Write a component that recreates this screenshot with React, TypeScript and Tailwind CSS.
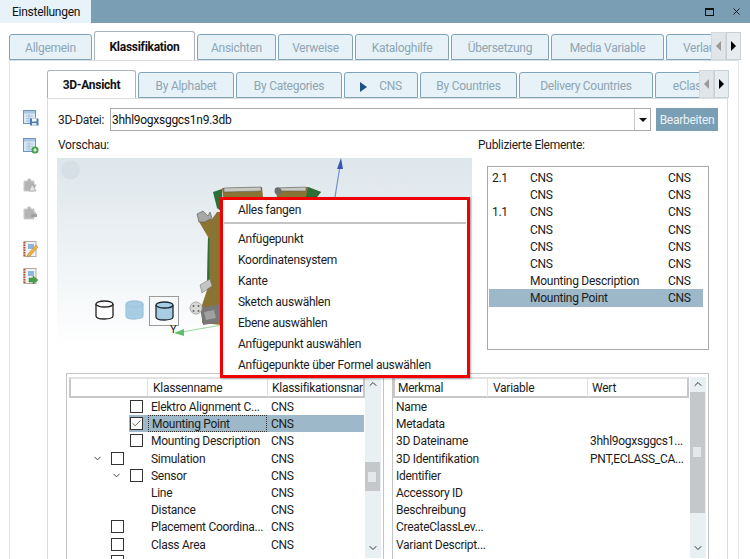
import { Check, ChevronDown, ChevronUp, X } from "lucide-react";

const outerTabs = [
  { label: "Allgemein", w: "w-[83px]" },
  { label: "Klassifikation", w: "w-[101px]", active: true },
  { label: "Ansichten", w: "w-[79px]" },
  { label: "Verweise", w: "w-[75px]" },
  { label: "Kataloghilfe", w: "w-[94px]" },
  { label: "Übersetzung", w: "w-[98px]" },
  { label: "Media Variable", w: "w-[113px]" },
  { label: "Verlauf", w: "w-[70px]" },
];

const innerTabs = [
  { label: "3D-Ansicht", w: "w-[89px]", active: true },
  { label: "By Alphabet", w: "w-[96px]" },
  { label: "By Categories", w: "w-[106px]" },
  { label: "CNS", w: "w-[74px]", arrow: true },
  { label: "By Countries", w: "w-[97px]" },
  { label: "Delivery Countries", w: "w-[134px]" },
  { label: "eClass", w: "w-[70px]" },
];

const published = [
  ["2.1", "CNS"],
  ["", "CNS"],
  ["1.1", "CNS"],
  ["", "CNS"],
  ["", "CNS"],
  ["", "CNS"],
  ["", "Mounting Description"],
  ["", "Mounting Point", "sel"],
];

const classes = [
  { name: "Elektro Alignment C...", box: 2 },
  { name: "Mounting Point", box: 2, checked: true },
  { name: "Mounting Description", box: 2 },
  { name: "Simulation", box: 1, chevron: 1 },
  { name: "Sensor", box: 2, chevron: 2 },
  { name: "Line" },
  { name: "Distance" },
  { name: "Placement Coordina...", box: 1 },
  { name: "Class Area", box: 1 },
  { name: "", box: 1, noCns: true },
];

const features = [
  ["Name", ""],
  ["Metadata", ""],
  ["3D Dateiname", "3hhl9ogxsggcs1..."],
  ["3D Identifikation", "PNT,ECLASS_CA..."],
  ["Identifier", ""],
  ["Accessory ID", ""],
  ["Beschreibung", ""],
  ["CreateClassLev...", ""],
  ["Variant Descript...", ""],
];

const menuItems = [
  "Anfügepunkt",
  "Koordinatensystem",
  "Kante",
  "Sketch auswählen",
  "Ebene auswählen",
  "Anfügepunkt auswählen",
  "Anfügepunkte über Formel auswählen",
];

function Tab({ label, w, active, arrow }: { label: string; w: string; active?: boolean; arrow?: boolean }) {
  if (active) {
    return (
      <div className={`${w} relative h-full shrink-0 flex items-center justify-center rounded-t-[3px] border border-b-0 border-[#a9b4ba] bg-white pt-[2px] font-bold text-[#111]`}>
        {label}
      </div>
    );
  }
  return (
    <div className={`${w} h-[26px] shrink-0 flex items-center justify-center gap-[12px] overflow-hidden whitespace-nowrap rounded-t-[3px] border border-[#7fa3b8] bg-[#e6f2f8] pt-[3px] text-[#8ea5b3]`}>
      {arrow && <span className="h-0 w-0 border-y-[5px] border-l-[7px] border-y-transparent border-l-[#1f4f86]" />}
      {label}
    </div>
  );
}

function TabScroller({ className }: { className: string }) {
  return (
    <div className={`absolute flex h-[28px] ${className}`}>
      <div className="flex w-[15px] items-center justify-center border border-[#d3dadd] bg-[#dfe5e8]">
        <span className="h-0 w-0 border-y-[5px] border-r-[5px] border-y-transparent border-r-[#9a9a9a]" />
      </div>
      <div className="flex w-[15px] items-center justify-center border border-[#c8d0d4] bg-[#e6ecef]">
        <span className="h-0 w-0 border-y-[5px] border-l-[5px] border-y-transparent border-l-[#000]" />
      </div>
    </div>
  );
}

function Cylinder({ fill, stroke }: { fill: string; stroke: string }) {
  return (
    <svg width="19" height="20" viewBox="0 0 19 20">
      <path d="M1 4v12c0 4 17 4 17 0V4" fill={fill} stroke={stroke} strokeWidth="1.3" />
      <ellipse cx="9.5" cy="4" rx="8.5" ry="3" fill={fill} stroke={stroke} strokeWidth="1.3" />
    </svg>
  );
}

function PreviewDrawing() {
  return (
    <svg className="absolute inset-0" width="415" height="190" viewBox="57 158 415 190">
      <circle cx="70.500" cy="170" r="9.500" fill="#d6dfe6" />
      {/* axes */}
      <path d="M335 197 340 166" stroke="#6f8fd6" strokeWidth="1.2" />
      <path d="M341 158 337 169 343 169Z" fill="#3c55b0" />
      <path d="M176 333 222 325" stroke="#9bdc9b" strokeWidth="1.2" />
      <path d="M174 333 184 329 184 336Z" fill="#5fc06a" />
      {/* part */}
      <path d="M213 192 222 189 222 212 217 208Z" fill="#2c6f38" />
      <path d="M222 188 262 187 263 197 223 197Z" fill="#8a7434" />
      <path d="M224 188 261 187 261 191 224 192Z" fill="#c9c9c4" stroke="#555" strokeWidth=".5" />
      <path d="M275 188 308 187 321 192 317 197 277 197Z" fill="#8a7434" />
      <path d="M308 187 321 192 317 197 306 197Z" fill="#2c6f38" />
      <path d="M276 188 306 187 306 191 277 191Z" fill="#c9c9c4" stroke="#555" strokeWidth=".5" />
      <circle cx="278" cy="191" r="3.500" fill="#6d6d6d" />
      <path d="M198 220 212 219 217 212 222 212 222 325 202 323 202 305 207 290 207 277 208 237Z" fill="#8a7434" />
      <path d="M208 238 209.500 238 209.500 280 207.500 280Z" fill="#2c6f38" />
      <path d="M197 214 203 211 208 216 210 212 212 218 205 222 199 222Z" fill="#a7a7a5" stroke="#555" strokeWidth=".6" />
      <path d="M200 285 210 279 212 286 202 293Z" fill="#c5c5c3" stroke="#666" strokeWidth=".5" />
      <path d="M200 308 222 304 222 322 203 325Z" fill="#777" />
      <path d="M204 312 214 310 216 318 206 320Z" fill="#a0a0a0" />
      <circle cx="196" cy="308" r="6" fill="#d8d8d6" stroke="#aaa" />
      <circle cx="193.500" cy="306" r="1" fill="#666" />
      <circle cx="198.500" cy="306" r="1" fill="#666" />
      <circle cx="193.500" cy="311" r="1" fill="#666" />
      <circle cx="198.500" cy="311" r="1" fill="#666" />
      {/* faint geometry */}
      <path d="M377 180 395 197M407 182 420 197" stroke="#e8e4e4" strokeWidth="1.5" strokeDasharray="2 2" />
    </svg>
  );
}

function ToolIcon({ kind }: { kind: number }) {
  if (kind === 0 || kind === 1) {
    return (
      <svg width="16" height="16" viewBox="0 0 16 16">
        <rect x=".5" y=".500" width="12" height="13" fill="#d8e8f5" stroke="#6e93bd" />
        <rect x="1" y="1" width="11" height="2.500" fill="#a9c6e2" />
        <path d="M3 6h7M3 8.500h7M3 11h7M6 4v9" stroke="#a9c3da" />
        {kind === 0 ? (
          <>
            <rect x="7" y="8.500" width="8.500" height="7" fill="#4d7bb5" />
            <rect x="9" y="8.500" width="4.500" height="3" fill="#fff" />
            <rect x="9" y="13" width="4.500" height="2.500" fill="#dfe8f2" />
          </>
        ) : (
          <>
            <circle cx="12" cy="12" r="3.500" fill="#3f9f46" />
            <path d="M12 10v4M10 12h4" stroke="#fff" />
          </>
        )}
      </svg>
    );
  }
  if (kind === 2 || kind === 3) {
    return (
      <svg width="16" height="16" viewBox="0 0 16 16">
        <path d="M1 5h3.500c-.5-3 4-3 3.500 0H11v3c2.500-.5 2.500 4 0 3.500V15H1Z" fill="#b4b4b4" stroke="#cfcfcf" />
        {kind === 2 ? <path d="M9 8l4 7H6Z" fill="#e2e2e2" stroke="#a0a0a0" strokeWidth=".7" /> : <path d="M8 10h6v3H8Z" fill="#a0a0a0" />}
      </svg>
    );
  }
  return (
    <svg width="16" height="17" viewBox="0 0 16 17">
      <rect x="1" y=".500" width="12" height="15" fill="#eef2f5" stroke="#b5a9a0" />
      <path d="M1.500 1v15" stroke="#b5512c" strokeWidth="2" strokeDasharray="1.500 1" />
      <rect x="5" y="3" width="6" height="5" fill="#8fb6dc" />
      {kind === 4 ? (
        <path d="M5 13l8-9 2 2-8 9-3 1Z" fill="#eeb04a" stroke="#c08a2a" strokeWidth=".6" />
      ) : (
        <path d="M6 10h4V8l5 4-5 4v-2H6Z" fill="#48a048" stroke="#2f7f2f" strokeWidth=".5" />
      )}
    </svg>
  );
}

function Scrollbar({ thumb, grip }: { thumb: string; grip: string }) {
  return (
    <div className="relative flex h-full w-[16px] shrink-0 flex-col items-center justify-between bg-[#e9f0f3] pb-[4px] pt-[1px]">
      <ChevronUp size={12} strokeWidth={2} className="text-[#333]" />
      <div className={`absolute left-0 w-[15px] bg-[#c4c8ca] ${thumb}`}>
        <div className={`absolute left-[3px] h-[10px] w-[8px] bg-[#e4e8ea] ${grip}`} />
      </div>
      <ChevronDown size={12} strokeWidth={2} className="text-[#333]" />
    </div>
  );
}

export default function App() {
  return (
    <div
      className="relative h-[559px] w-[750px] overflow-hidden bg-white text-[12px] leading-[17px] text-[#1c1c1c]"
      style={{ fontFamily: 'Roboto, "Noto Sans", sans-serif', letterSpacing: "-0.27px" }}
    >
      {/* title bar */}
      <div className="flex h-[23px] items-stretch bg-[#7a9fb5]">
        <div className="flex w-[91px] items-center bg-[#e8f3f9] pl-[12px] pt-[2px] text-[#111]">Einstellungen</div>
        <div className="ml-auto flex items-center gap-[17px] pr-[8px]">
          <div className="h-[8px] w-[9px] border border-t-2 border-[#111]" />
          <X size={11} strokeWidth={2} className="text-[#111]" />
        </div>
      </div>

      {/* outer tabs */}
      <div className="ml-[9px] mt-[8px] flex h-[29px] w-[702px] items-end gap-[2px] overflow-hidden">
        {outerTabs.map((t) => (
          <Tab key={t.label} {...t} />
        ))}
      </div>
      <TabScroller className="left-[711px] top-[32px]" />

      {/* outer panel */}
      <div className="ml-[9px] flex h-[499px] w-[730px] border-x border-t border-x-[#e2e7e9] border-t-[#d9dfe2]">
        <div className="flex w-[37px] shrink-0 flex-col items-center pl-[4px] pt-[49px]">
          <ToolIcon kind={0} />
          <div className="mt-[12px]"><ToolIcon kind={1} /></div>
          <div className="mt-[22px]"><ToolIcon kind={2} /></div>
          <div className="mt-[12px]"><ToolIcon kind={3} /></div>
          <div className="mt-[21px]"><ToolIcon kind={4} /></div>
          <div className="mt-[10px]"><ToolIcon kind={5} /></div>
        </div>

        <div className="w-[681px]">
          <div className="mt-[9px] flex h-[28px] w-[652px] items-end gap-[2px] overflow-hidden">
            {innerTabs.map((t) => (
              <Tab key={t.label} {...t} />
            ))}
          </div>

          {/* inner panel */}
          <div className="h-[462px] border-x border-t border-x-[#d8dde0] border-t-[#d9dfe2] pl-[10px] pt-[9px]">
            <div className="flex h-[23px] items-center">
              <span className="w-[52px] pt-[2px]">3D-Datei:</span>
              <div className="flex h-[23px] w-[541px] items-center border border-[#a9a9a9] pl-[1px] text-[#111]">
                <span className="pt-[2px]">3hhl9ogxsggcs1n9.3db</span>
                <div className="ml-auto flex h-full w-[16px] items-center justify-center border-l border-[#c8c8c8]">
                  <span className="mt-[1px] h-0 w-0 border-x-[4px] border-t-[4px] border-x-transparent border-t-[#111]" />
                </div>
              </div>
              <div className="ml-[5px] flex h-[23px] w-[62px] items-center justify-center bg-[#7a9fb5] pt-[2px] text-[#e9f2f7]">Bearbeiten</div>
            </div>

            <div className="flex">
              <div className="w-[420px]">
                <div className="mt-[6px] h-[16px]">Vorschau:</div>
                <div className="relative mt-[5px] h-[190px] w-[415px] -translate-x-px bg-linear-to-b from-[#dde6eb] to-white">
                  <PreviewDrawing />
                  <div className="absolute left-[38px] top-[142px]"><Cylinder fill="#fff" stroke="#222" /></div>
                  <div className="absolute left-[68px] top-[142px]"><Cylinder fill="#a8cce2" stroke="#a0c6de" /></div>
                  <div className="absolute left-[92px] top-[138px] flex h-[30px] w-[30px] items-center justify-center border border-[#9a9a9a]">
                    <Cylinder fill="#a8cce2" stroke="#1c2a33" />
                  </div>
                  <span className="absolute left-[113px] top-[166px] text-[11px] leading-none">Y</span>
                </div>
              </div>
              <div className="w-[230px]">
                <div className="mt-[6px] h-[16px]">Publizierte Elemente:</div>
                <div className="ml-[9px] mt-[13px] h-[184px] w-[222px] border border-[#a9a9a9] px-[1px] pt-[2px]">
                  {published.map(([num, name, sel], i) => (
                    <div key={i} className={`flex h-[17.2px] w-[214px] items-center pt-[2px] ${sel ? "bg-[#9db8c8]" : ""}`}>
                      <span className="w-[41px] pl-[3px]">{num}</span>
                      <span className="w-[138px]">{name}</span>
                      <span>CNS</span>
                    </div>
                  ))}
                </div>
              </div>
            </div>

            {/* lower tables */}
            <div className="ml-[8px] mt-[23px] flex gap-[8px]">
              <div className="flex h-[190px] w-[318px] shrink-0 overflow-hidden border border-[#c4c4c4] pl-[2px] pt-[3px]">
                <div className="w-[296px] shrink-0">
                  <div className="flex h-[21px] items-center border-2 border-[#c8c8c8] border-t-[#e2e2e2]">
                    <span className="w-[77px] shrink-0 self-stretch border-r border-[#e2e2e2]" />
                    <span className="w-[120px] shrink-0 border-r border-[#e2e2e2] pl-[5px] pt-[2px] leading-[17px]">Klassenname</span>
                    <span className="min-w-0 overflow-hidden whitespace-nowrap pl-[4px] pt-[2px]">Klassifikationsnar</span>
                  </div>
                  {classes.map((c) => (
                    <div key={c.name} className="relative flex h-[17.2px] items-center">
                      {c.checked && <div className="absolute inset-y-0 left-[60px] right-[1px] bg-[#9db8c8]" />}
                      <div className="relative w-[79px] shrink-0 self-stretch">
                        {c.chevron && (
                          <ChevronDown
                            size={11}
                            strokeWidth={2}
                            className={`absolute top-[3px] text-[#333] ${c.chevron === 1 ? "left-[23px]" : "left-[42px]"}`}
                          />
                        )}
                        {c.box && (
                          <div className={`absolute top-[2px] flex h-[13px] w-[13px] items-center justify-center border border-[#333] bg-white ${c.box === 1 ? "left-[42px]" : "left-[61px]"}`}>
                            {c.checked && <Check size={11} strokeWidth={1.5} className="text-[#222]" />}
                          </div>
                        )}
                      </div>
                      <span className={`relative flex h-full w-[119px] items-center whitespace-nowrap pl-[3px] pt-[2px] ${c.checked ? "border border-dotted border-[#333] pl-[2px]" : ""}`}>{c.name}</span>
                      {!c.noCns && <span className="relative pl-[4px] pt-[2px]">CNS</span>}
                    </div>
                  ))}
                </div>
                <div className="h-[181px] shrink-0"><Scrollbar thumb="top-[85px] h-[29px]" grip="top-[10px]" /></div>
              </div>

              <div className="flex h-[190px] w-[317px] shrink-0 overflow-hidden border border-[#c4c4c4] pt-[3px]">
                <div className="w-[296px] shrink-0">
                  <div className="flex h-[21px] items-center border-2 border-[#c8c8c8] border-t-[#e2e2e2]">
                    <span className="w-[93px] shrink-0 border-r border-[#e2e2e2] pl-[3px] pt-[2px] leading-[17px]">Merkmal</span>
                    <span className="w-[100px] shrink-0 border-r border-[#e2e2e2] pl-[5px] pt-[2px] leading-[17px]">Variable</span>
                    <span className="pl-[4px] pt-[2px]">Wert</span>
                  </div>
                  {features.map(([name, value]) => (
                    <div key={name} className="flex h-[17.2px] items-center pl-[3px] pt-[2px]">
                      <span className="w-[194px] whitespace-nowrap">{name}</span>
                      <span className="whitespace-nowrap">{value}</span>
                    </div>
                  ))}
                </div>
                <div className="ml-[1px] h-[181px] shrink-0"><Scrollbar thumb="top-[15px] h-[121px]" grip="top-[55px]" /></div>
              </div>
            </div>
          </div>
        </div>
      </div>

      <TabScroller className="left-[699px] top-[70px]" />

      {/* context menu */}
      <div className="absolute left-[220px] top-[197px] h-[181px] w-[250px] border-[3px] border-[#f00000] bg-white shadow-[1px_1px_2px_rgba(0,0,0,0.35)]">
        <div className="flex h-[18px] items-center pl-[15px] pt-[2px]">Alles fangen</div>
        <div className="mx-[1px] mb-[4px] mt-[4px] h-[2px] bg-[#c4c4c4]" />
        {menuItems.map((m) => (
          <div key={m} className="flex h-[21px] items-center pl-[15px] pt-[2px]">{m}</div>
        ))}
      </div>
    </div>
  );
}
